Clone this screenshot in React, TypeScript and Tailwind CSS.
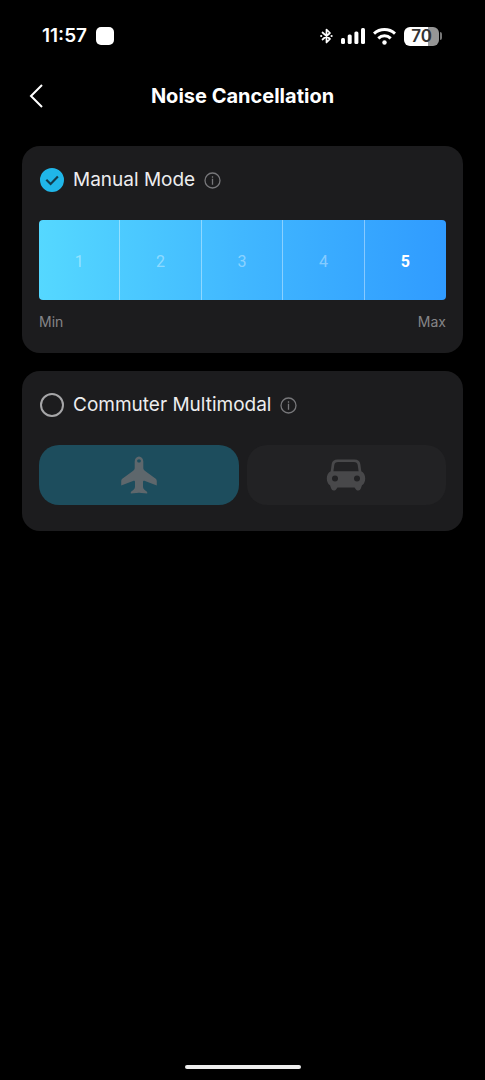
import { useState } from "react";

const LEVELS = [1, 2, 3, 4, 5];

const SCENES = [
  { id: "plane", label: "Airplane", Icon: PlaneIcon },
  { id: "car", label: "Car", Icon: CarIcon },
];

function PlaneIcon() {
  return (
    <svg width="36" height="38" viewBox="0 0 36 38" fill="#5e676c" aria-hidden="true">
      <path
        fillRule="evenodd"
        d="M18 .5c-2.500 0-4.200 2.200-4.300 4.900v6.700c0 1-.5 1.800-1.500 2.600L1.600 22.500c-1 .8-1.400 1.500-1.400 2.700v4.200l11.800-4.500c1.300-.4 2 0 2 1.100v4.800c0 1.100-.4 1.900-1.200 2.700l-3 2.600v1.500l8.200-.9 8.200.9v-1.500l-3-2.600c-.8-.8-1.200-1.600-1.200-2.700V26c0-1.100.7-1.500 2-1.100l11.800 4.500v-4.200c0-1.200-.4-1.900-1.400-2.700l-10.600-7.800c-1-.8-1.500-1.600-1.500-2.600V5.400C22.200 2.700 20.500.5 18 .5Zm0 2.700a2 2 0 0 1 2 1.900l-.9 1.400h-2.200L16 5.100a2 2 0 0 1 2-1.900Z"
      />
    </svg>
  );
}

function CarIcon() {
  return (
    <svg width="40" height="32" viewBox="0 0 40 32" fill="#48484a" aria-hidden="true">
      <path
        fillRule="evenodd"
        d="M11.500 .5h17c3.400 0 5.300 1.500 5.800 4.600l1 7.100c2.700 1.500 3.900 4 3.900 7.300 0 3.200-1.200 5.500-3.200 6.800l-1.200 3.300c-.5 1.300-1.300 1.900-2.500 1.900s-2-.5-2.700-1.600L28.500 28.500h-17l-1.100 1.400c-.7 1.100-1.500 1.600-2.700 1.600s-2-.6-2.500-1.900L4 26.300c-2-1.300-3.200-3.600-3.200-6.800 0-3.300 1.200-5.800 3.900-7.300l1-7.100C6.200 2 8.100.5 11.500.5Zm.6 2.400c-2.300 0-3.500 1-3.800 3l-.9 6.300h25.200l-.9-6.300c-.3-2-1.500-3-3.800-3ZM9 16.400a3 3 0 1 0 0 6 3 3 0 0 0 0-6Zm22 0a3 3 0 1 0 0 6 3 3 0 0 0 0-6Z"
      />
    </svg>
  );
}

function StatusBar() {
  return (
    <div className="flex h-[72px] items-center justify-between pl-[42px] pr-[43px]">
      <div className="flex items-center gap-[9px]">
        <span className="text-[19px] font-semibold leading-6">11:57</span>
        <span className="h-[18px] w-[18px] rounded-[5px] bg-white" />
      </div>
      <div className="flex items-center gap-2">
        <svg width="13" height="16" viewBox="0 0 13 16" fill="none" stroke="#fff" strokeWidth="1.700" aria-hidden="true">
          <path d="m2.500 4.500 7.500 6.500-3.500 3.500v-13L10 5l-7.500 6.500" strokeLinejoin="round" strokeLinecap="round" />
          <circle cx="1.200" cy="8" r="1.100" fill="#fff" stroke="none" />
          <circle cx="11.600" cy="8" r="1.100" fill="#fff" stroke="none" />
        </svg>
        <svg width="24" height="16" viewBox="0 0 24 16" fill="#fff" aria-hidden="true">
          <rect x="0" y="10" width="4" height="6" rx="1.500" />
          <rect x="6.700" y="6.500" width="4" height="9.500" rx="1.500" />
          <rect x="13.400" y="3.500" width="4" height="12.500" rx="1.500" />
          <rect x="20" y="0" width="4" height="16" rx="1.500" />
        </svg>
        <svg width="23" height="17" viewBox="0 0 23 17" fill="none" stroke="#fff" strokeWidth="3" aria-hidden="true">
          <path d="M1 5.700a15.500 15.500 0 0 1 21 0" />
          <path d="M5.300 10.300a9 9 0 0 1 12.400 0" />
          <circle cx="11.500" cy="14.500" r="2.200" fill="#fff" stroke="none" />
        </svg>
        <div className="flex items-center gap-px">
          <span className="flex h-[19px] w-[35px] items-center justify-center rounded-[6px] bg-linear-to-r from-white from-70% to-[#969696] to-70% text-[17px] font-semibold leading-5 text-[#333]">
            70
          </span>
          <span className="h-2 w-[2px] rounded-r-sm bg-[#777]" />
        </div>
      </div>
    </div>
  );
}

function InfoButton({ label }: { label: string }) {
  return (
    <button type="button" aria-label={label}>
      <svg width="17" height="17" viewBox="0 0 17 17" fill="none" stroke="#77777a" strokeWidth="1.300">
        <circle cx="8.500" cy="8.500" r="7.500" />
        <path d="M8.500 6.700v6M8.500 4.200v1.500" />
      </svg>
    </button>
  );
}

type ModeRowProps = {
  id: string;
  label: string;
  checked: boolean;
  onSelect: () => void;
};

function ModeRow({ id, label, checked, onSelect }: ModeRowProps) {
  return (
    <div className="flex h-6 items-center gap-[9px] pl-px">
      <span className="grid">
        <input
          id={id}
          type="radio"
          name="mode"
          checked={checked}
          onChange={onSelect}
          className="col-start-1 row-start-1 h-6 w-6 appearance-none rounded-full border-2 border-[#a6a6a8] checked:border-[#20b6e8] checked:bg-[#20b6e8]"
        />
        {checked && (
          <svg
            className="pointer-events-none col-start-1 row-start-1"
            width="24"
            height="24"
            viewBox="0 0 24 24"
            fill="none"
            stroke="#123c4c"
            strokeWidth="2.200"
            aria-hidden="true"
          >
            <path d="m6.300 11.800 4.300 4.200 7.300-7.400" />
          </svg>
        )}
      </span>
      <label htmlFor={id} className="text-[19px] leading-6 text-[#ededee]">
        {label}
      </label>
      <InfoButton label={`About ${label}`} />
    </div>
  );
}

export default function App() {
  const [mode, setMode] = useState("manual");
  const [level, setLevel] = useState(5);
  const [scene, setScene] = useState("plane");

  return (
    <div className="flex min-h-screen flex-col bg-black font-['Inter',sans-serif] text-white">
      <StatusBar />

      <header className="grid grid-cols-[24px_1fr_24px] items-center px-6 pb-[10px] pt-3">
        <button type="button" aria-label="Back" className="flex justify-center">
          <svg width="16" height="24" viewBox="0 0 16 24" fill="none" stroke="#fff" strokeWidth="2">
            <path d="M14 1 3 12l11 11" />
          </svg>
        </button>
        <h1 className="text-center text-[20px] font-bold leading-6">Noise Cancellation</h1>
      </header>

      <main className="flex flex-col gap-[18px] px-[22px] pt-7">
        <section className="rounded-[18px] bg-[#1c1c1e] px-[17px] pb-[21px] pt-[22px]">
          <ModeRow id="manual" label="Manual Mode" checked={mode === "manual"} onSelect={() => setMode("manual")} />
          <div className="mt-7 grid h-20 grid-cols-5 divide-x divide-white/40 overflow-hidden rounded-[4px] bg-linear-to-r from-[#55d8ff] via-[#41b7ff] to-[#309bff]">
            {LEVELS.map((n) => (
              <button
                key={n}
                type="button"
                aria-pressed={level === n}
                onClick={() => setLevel(n)}
                className={`pt-1 font-[Roboto,sans-serif] text-base ${level === n ? "font-bold text-white" : "text-white/40"}`}
              >
                {n}
              </button>
            ))}
          </div>
          <div className="mt-3 flex justify-between text-sm leading-5 text-[#858587]">
            <span>Min</span>
            <span>Max</span>
          </div>
        </section>

        <section className="rounded-[18px] bg-[#1c1c1e] px-[17px] pb-[26px] pt-[22px]">
          <ModeRow
            id="commuter"
            label="Commuter Multimodal"
            checked={mode === "commuter"}
            onSelect={() => setMode("commuter")}
          />
          <div className="mt-7 grid grid-cols-2 gap-2">
            {SCENES.map(({ id, label, Icon }) => (
              <button
                key={id}
                type="button"
                aria-label={label}
                aria-pressed={scene === id}
                onClick={() => setScene(id)}
                className={`flex h-[60px] items-center justify-center rounded-[20px] ${
                  scene === id ? "bg-[#1d4d5d]" : "bg-[#222224]"
                }`}
              >
                <Icon />
              </button>
            ))}
          </div>
        </section>
      </main>

      <div className="mb-[11px] mt-auto h-1 w-[116px] self-center rounded-full bg-[#eee]" />
    </div>
  );
}
